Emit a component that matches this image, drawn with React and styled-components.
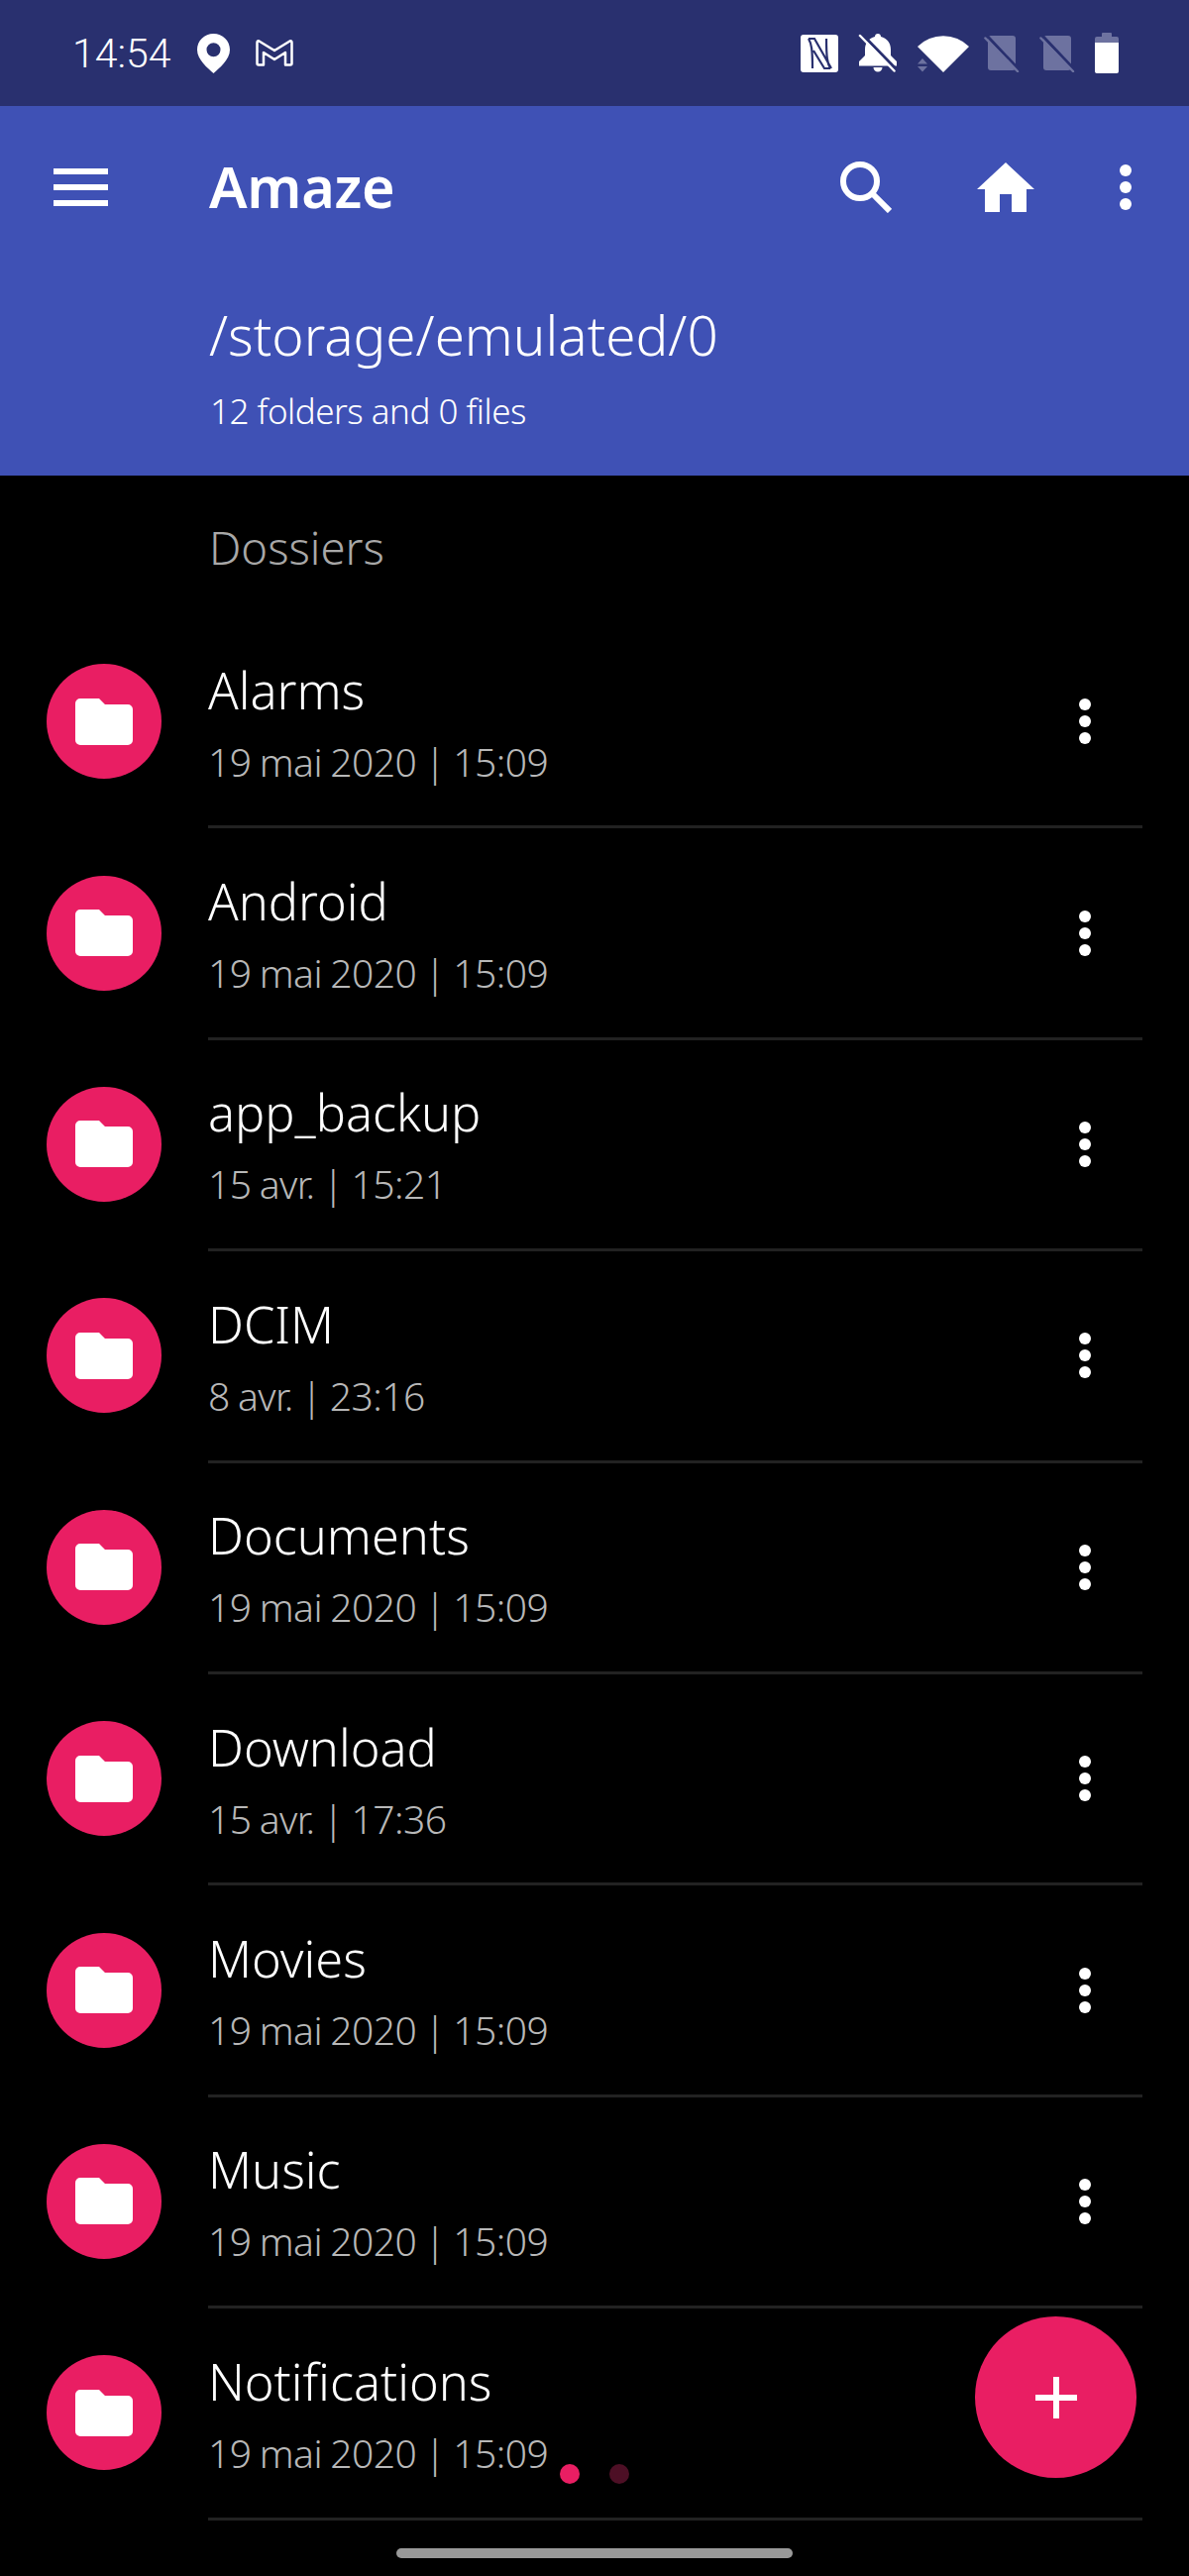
import React from 'react';
import styled, { createGlobalStyle } from 'styled-components';

const folders = [
  { name: 'Alarms', date: '19 mai 2020 | 15:09' },
  { name: 'Android', date: '19 mai 2020 | 15:09' },
  { name: 'app_backup', date: '15 avr. | 15:21' },
  { name: 'DCIM', date: '8 avr. | 23:16' },
  { name: 'Documents', date: '19 mai 2020 | 15:09' },
  { name: 'Download', date: '15 avr. | 17:36' },
  { name: 'Movies', date: '19 mai 2020 | 15:09' },
  { name: 'Music', date: '19 mai 2020 | 15:09' },
  { name: 'Notifications', date: '19 mai 2020 | 15:09' },
];

const BAR = '#29306f';
const DIM = '#6d72a0';

const PinIcon = () => (
  <svg width="33" height="40" viewBox="0 0 33 40">
    <path fillRule="evenodd" fill="#fff" d="M16.5 0C7.4 0 0 7.2 0 16.2 0 26 11 35 16.5 40 22 35 33 26 33 16.2 33 7.2 25.6 0 16.5 0zm0 9.300a7 7 0 1 1 0 14 7 7 0 0 1 0-14z" />
  </svg>
);

const GmailIcon = () => (
  <svg width="38" height="27" viewBox="0 0 38 27">
    <path fill="none" stroke="#fff" strokeWidth="2.500" strokeLinejoin="round" d="M3.500 1.500L19 11 34.500 1.500Q36.500.8 36.500 3V24Q36.500 25.500 35 25.500H30V13L19 20 8 13V25.500H3Q1.500 25.500 1.500 24V3Q1.500.8 3.500 1.500z" />
  </svg>
);

const NfcIcon = () => (
  <svg width="38" height="38" viewBox="0 0 38 38">
    <rect width="38" height="38" rx="3" fill="#fff" />
    <path fill="none" stroke={BAR} strokeWidth="2.200" d="M8 4C11 9 12 15 12 34M8 4H14L31 34M30 34C27 29 26 23 26 4M30 34H24L13 16" />
  </svg>
);

const BellOffIcon = () => (
  <svg width="39" height="39" viewBox="0 0 39 39">
    <path fill="#fff" d="M20 0c-1.800 0-3 1.200-3 3-6 1.500-10 6-10 13v6l-6 6v4.500h38V28l-6-6v-6c0-7-4-11.500-10-13 0-1.800-1.200-3-3-3zM15.500 34a4.500 4.500 0 0 0 9 0z" />
    <path stroke={BAR} strokeWidth="3" d="M3.500 0l36 37" />
    <path stroke="#fff" strokeWidth="2.500" strokeLinecap="round" d="M2 2l34.500 35.500" />
  </svg>
);

const WifiIcon = () => (
  <svg width="54" height="38" viewBox="0 0 54 38">
    <path fill="#fff" d="M1 12A37 37 0 0 1 53 12L27 38z" />
    <path fill={DIM} d="M6 24l5 5.500H1zM1 32h10l-5 5.500z" />
  </svg>
);

const SimOffIcon = () => (
  <svg width="36" height="38" viewBox="0 0 36 38">
    <rect x="4" y="1" width="28" height="35" rx="3" fill={DIM} />
    <path stroke={BAR} strokeWidth="3" d="M3 1l33 35" />
    <path stroke={DIM} strokeWidth="2.500" strokeLinecap="round" d="M1.500 3.500L34 37" />
  </svg>
);

const BatteryIcon = () => (
  <svg width="24" height="41" viewBox="0 0 24 41">
    <path fill={DIM} d="M2 4h5V1a1 1 0 0 1 1-1h8a1 1 0 0 1 1 1v3h5a2 2 0 0 1 2 2v4H0V6a2 2 0 0 1 2-2z" />
    <path fill="#fff" d="M0 10h24v29a2 2 0 0 1-2 2H2a2 2 0 0 1-2-2z" />
  </svg>
);

const SearchIcon = () => (
  <svg width="52" height="52" viewBox="0 0 52 52">
    <circle cx="20" cy="20" r="17" fill="none" stroke="#fff" strokeWidth="6" />
    <path stroke="#fff" strokeWidth="6" d="M32 32l18 18" />
  </svg>
);

const HomeIcon = () => (
  <svg width="58" height="50" viewBox="0 0 58 50">
    <path fill="#fff" d="M29 0L0 27h8v23h15V32h12v18h15V27h8z" />
  </svg>
);

const MoreIcon = () => (
  <svg width="12" height="46" viewBox="0 0 12 46">
    <circle cx="6" cy="6" r="6" fill="#fff" />
    <circle cx="6" cy="23" r="6" fill="#fff" />
    <circle cx="6" cy="40" r="6" fill="#fff" />
  </svg>
);

const FolderIcon = () => (
  <svg width="58" height="47" viewBox="0 0 58 47">
    <path fill="#fff" d="M5 0h19l6 6h23a5 5 0 0 1 5 5v31a5 5 0 0 1-5 5H5a5 5 0 0 1-5-5V5a5 5 0 0 1 5-5z" />
  </svg>
);

function App() {
  return (
    <Screen>
      <GlobalStyle />
      <StatusBar>
        <StatusLeft>
          <Clock>14:54</Clock>
          <PinIcon />
          <GmailIcon />
        </StatusLeft>
        <StatusRight>
          <NfcIcon />
          <BellOffIcon />
          <WifiSlot>
            <WifiIcon />
          </WifiSlot>
          <SimOffIcon />
          <SimOffIcon />
          <BatteryIcon />
        </StatusRight>
      </StatusBar>

      <AppBar>
        <Toolbar>
          <MenuButton>
            <span />
            <span />
            <span />
          </MenuButton>
          <Title>Amaze</Title>
          <Actions>
            <SearchIcon />
            <HomeIcon />
            <MoreIcon />
          </Actions>
        </Toolbar>
        <PathText>/storage/emulated/0</PathText>
        <CountText>12 folders and 0 files</CountText>
      </AppBar>

      <SectionLabel>Dossiers</SectionLabel>

      {folders.map((folder) => (
        <Row key={folder.name}>
          <Badge>
            <FolderIcon />
          </Badge>
          <RowBody>
            <RowText>
              <Name>{folder.name}</Name>
              <DateText>{folder.date}</DateText>
            </RowText>
            <RowMenu>
              <MoreIcon />
            </RowMenu>
          </RowBody>
        </Row>
      ))}

      <Dots>
        <Dot $active />
        <Dot />
      </Dots>
      <Fab>
        <svg width="42" height="42" viewBox="0 0 42 42">
          <path stroke="#fff" strokeWidth="6" d="M21 0v42M0 21h42" />
        </svg>
      </Fab>
      <HomeBar />
    </Screen>
  );
}

export default App;

const GlobalStyle = createGlobalStyle`
  html, body {
    margin: 0;
    padding: 0;
    background: #000;
  }
`;

const Screen = styled.div`
  position: relative;
  width: 1200px;
  height: 2600px;
  overflow: hidden;
  background: #000;
  color: #fff;
  font-family: "Noto Sans", sans-serif;
`;

const StatusBar = styled.div`
  display: flex;
  justify-content: space-between;
  align-items: center;
  height: 107px;
  padding: 0 71px 0 73px;
  box-sizing: border-box;
  background: ${BAR};
`;

const StatusLeft = styled.div`
  display: flex;
  align-items: center;
  gap: 26px;
`;

const StatusRight = styled.div`
  display: flex;
  align-items: center;
  gap: 20px;
`;

const WifiSlot = styled.div`
  display: flex;
  margin-right: -6px;
`;

const Clock = styled.span`
  font-family: "Roboto", sans-serif;
  font-weight: 300;
  font-size: 41px;
  line-height: 50px;
`;

const AppBar = styled.div`
  height: 373px;
  background: #3f51b5;
`;

const Toolbar = styled.div`
  display: flex;
  align-items: center;
  height: 164px;
  padding: 0 58px 0 54px;
`;

const MenuButton = styled.div`
  display: flex;
  flex-direction: column;
  gap: 10px;
  width: 55px;
  margin-right: 102px;

  span {
    height: 6px;
    background: #fff;
  }
`;

const Title = styled.div`
  flex: 1;
  font-size: 57.5px;
  font-weight: 600;
  letter-spacing: -0.3px;
  line-height: 70px;
  margin-top: -2px;
`;

const Actions = styled.div`
  display: flex;
  align-items: center;
  gap: 86px;
`;

const PathText = styled.div`
  margin: 35px 0 0 211px;
  font-size: 54.8px;
  font-weight: 300;
  line-height: 64px;
`;

const CountText = styled.div`
  margin: 23px 0 0 212px;
  font-size: 35px;
  font-weight: 300;
  letter-spacing: -0.5px;
  line-height: 44px;
`;

const SectionLabel = styled.div`
  height: 143px;
  padding: 44px 0 0 211px;
  box-sizing: border-box;
  font-size: 45.5px;
  font-weight: 300;
  line-height: 56px;
  color: #a8a8a8;
`;

const Row = styled.div`
  display: flex;
  align-items: center;
  height: 213.4px;
  padding: 0 47px;
`;

const Badge = styled.div`
  display: flex;
  align-items: center;
  justify-content: center;
  flex: none;
  width: 116px;
  height: 116px;
  margin: 0 47px 3px 0;
  border-radius: 50%;
  background: #e91e63;
`;

const RowBody = styled.div`
  display: flex;
  align-items: center;
  justify-content: space-between;
  flex: 1;
  align-self: stretch;
  border-bottom: 3px solid #222;
`;

const RowText = styled.div`
  display: flex;
  flex-direction: column;
  gap: 20px;
  padding-top: 3px;
`;

const Name = styled.div`
  font-size: 50.5px;
  font-weight: 300;
  line-height: 58px;
`;

const DateText = styled.div`
  font-size: 39px;
  font-weight: 300;
  letter-spacing: -0.5px;
  word-spacing: -1.5px;
  line-height: 46px;
  color: #b8b8b8;
`;

const RowMenu = styled.div`
  display: flex;
  margin-right: 52px;
`;

const Dots = styled.div`
  position: absolute;
  left: 565px;
  top: 2487px;
  display: flex;
  gap: 30px;
`;

const Dot = styled.div`
  width: 20px;
  height: 20px;
  border-radius: 50%;
  background: ${(props) => (props.$active ? '#e91e63' : '#4d0f25')};
`;

const Fab = styled.div`
  position: absolute;
  left: 984px;
  top: 2338px;
  display: flex;
  align-items: center;
  justify-content: center;
  width: 163px;
  height: 163px;
  border-radius: 50%;
  background: #e91e63;
`;

const HomeBar = styled.div`
  position: absolute;
  left: 400px;
  top: 2572px;
  width: 400px;
  height: 10px;
  border-radius: 5px;
  background: #999;
`;
